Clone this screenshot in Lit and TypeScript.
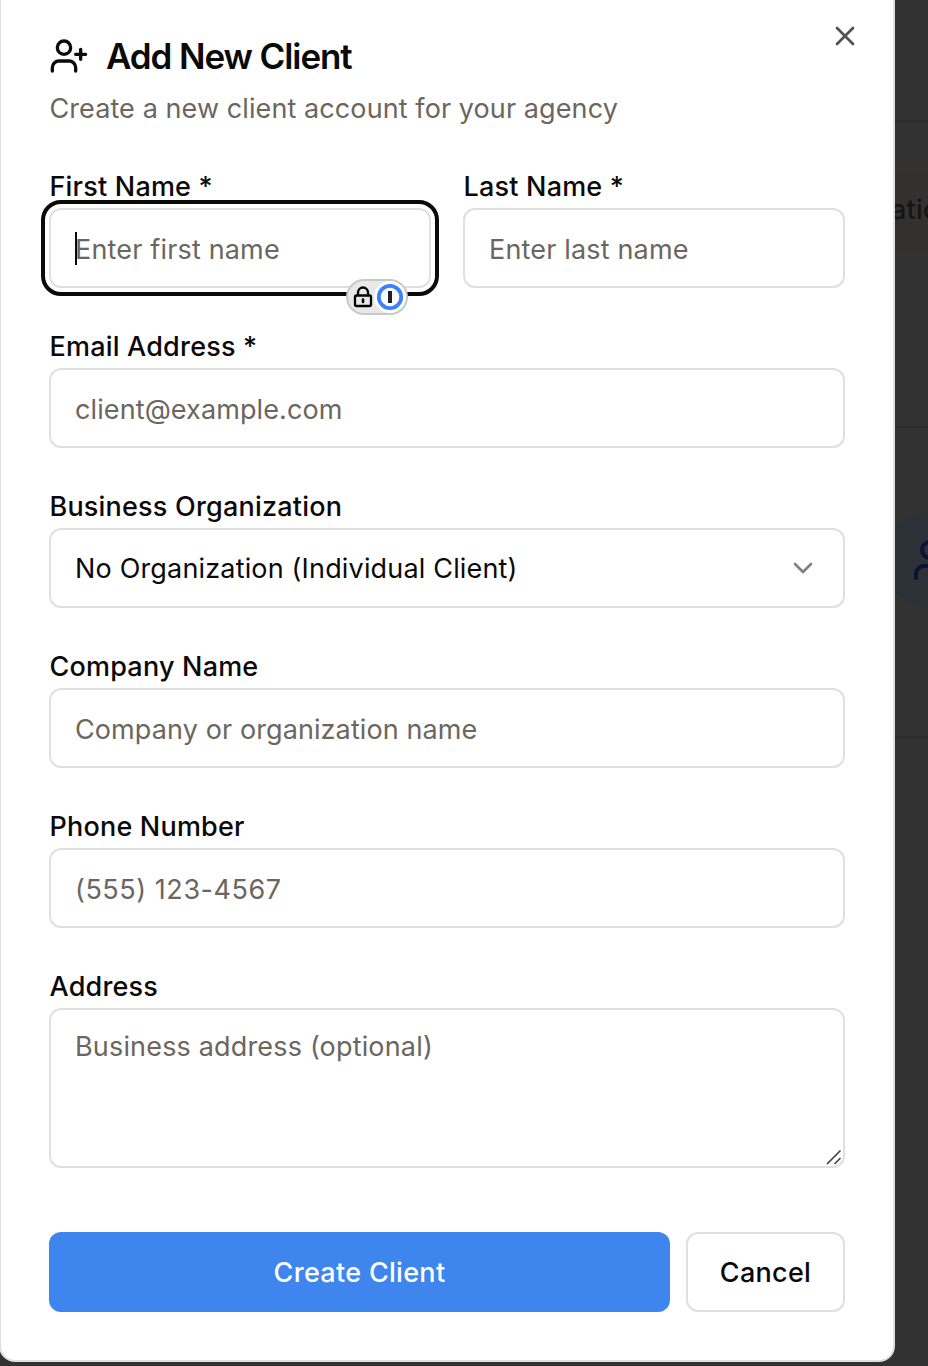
import { LitElement, html, css, svg, nothing } from "lit";
import { customElement, property } from "lit/decorators.js";

const userShape = svg`<path d="M16 21v-2a4 4 0 0 0-4-4H6a4 4 0 0 0-4 4v2"/><circle cx="9" cy="7" r="4"/>`;

@customElement("form-field")
class FormField extends LitElement {
  @property() label = "";
  @property() hint = "";
  @property() value = "";
  @property() kind = "input";
  @property() spacing = "normal";
  @property({ type: Boolean }) active = false;

  static styles = css`
    :host { display: block; min-width: 0; color: #0c0a09; }
    .label { height: 28px; line-height: 30px; margin-bottom: 8px; padding-left: 0.5px; font-weight: 500; letter-spacing: 0.2px; white-space: nowrap; }
    .box { position: relative; box-sizing: border-box; height: 80px; border: 2px solid #e0e0e0; border-radius: 12px; padding: 1px 24px 0; display: flex; align-items: center; justify-content: space-between; background: #fff; line-height: 40px; white-space: nowrap; letter-spacing: 0.17px; }
    .area { height: 160px; padding: 17px 24px; align-items: flex-start; }
    .tight { letter-spacing: 0.1px; }
    .loose { letter-spacing: 0.55px; }
    .active { outline: 4px solid #0c0a09; outline-offset: 4px; }
    .hint { color: #6b6660; padding-top: 2px; }
    .area .hint { padding-top: 0; }
    .caret { position: absolute; left: 24px; top: 22px; width: 2px; height: 33px; background: #0c0a09; }
    .chevron { width: 32px; height: 32px; color: #808080; margin-top: -1px; }
    .grip { position: absolute; right: 0; bottom: 0; width: 18px; height: 18px; }
    .manager { position: absolute; right: 21px; bottom: -29px; box-sizing: border-box; width: 62px; height: 36px; border: 2px solid #c9c9c9; border-radius: 18px; background: #e8e8e8; display: flex; align-items: center; }
    .manager svg { display: block; width: 58px; height: 32px; }
  `;

  render() {
    return html`
      <div class="label">${this.label}</div>
      <div class="box ${this.kind} ${this.spacing} ${this.active ? "active" : ""}">
        ${this.value ? html`<span>${this.value}</span>` : html`<span class="hint">${this.hint}</span>`}
        ${this.kind === "select"
          ? html`<svg class="chevron" viewBox="0 0 24 24" fill="none" stroke="currentColor" stroke-width="2" stroke-linecap="round" stroke-linejoin="round"><path d="m6 9 6 6 6-6"/></svg>`
          : nothing}
        ${this.kind === "area"
          ? html`<svg class="grip" viewBox="0 0 18 18" stroke="#444" stroke-width="1.7"><path d="M2 16 15.500 2.500M9.500 16 15.500 10"/></svg>`
          : nothing}
        ${this.active
          ? html`<div class="caret"></div>
              <div class="manager">
                <svg viewBox="0 0 58 32" fill="none">
                  <circle cx="42" cy="16" r="16" fill="#fff"/>
                  <rect x="7" y="14.500" width="16" height="10.500" rx="1.500" stroke="#000" stroke-width="2.300"/>
                  <path d="M10 14v-2.500a5 5 0 0 1 10 0V14" stroke="#000" stroke-width="2.300"/>
                  <path d="M15 18.500v2.500" stroke="#000" stroke-width="2.600" stroke-linecap="round"/>
                  <circle cx="42" cy="16" r="11.200" stroke="#3b82f6" stroke-width="3.800"/>
                  <path d="M42 10v12" stroke="#222" stroke-width="4"/>
                </svg>
              </div>`
          : nothing}
      </div>
    `;
  }
}

@customElement("app-root")
class AppRoot extends LitElement {
  static styles = css`
    :host { display: block; position: relative; width: 928px; height: 1366px; overflow: hidden; background: #323232; font: 400 27px Inter, sans-serif; color: #0c0a09; }
    .page { position: absolute; top: 0; right: 0; width: 33px; height: 1366px; overflow: hidden; }
    .rule { position: absolute; left: 0; right: 0; height: 2px; background: #2c2c2c; }
    .r1 { top: 120px; } .r2 { top: 426px; } .r3 { top: 736px; }
    .tab { position: absolute; left: 0; top: 170px; width: 33px; height: 80px; background: #32312f; }
    .word { position: absolute; left: -4px; top: 193px; line-height: 34px; font-weight: 500; letter-spacing: 0.2px; color: #151515; }
    .avatar { position: absolute; left: -12px; top: 512px; width: 96px; height: 96px; border-radius: 50%; background: #2c3037; color: #0a1236; display: flex; align-items: center; justify-content: center; }
    .avatar svg { width: 48px; height: 48px; margin-left: 10px; }
    .dialog { position: relative; box-sizing: border-box; width: 896px; height: 1378px; margin: -16px 0 0 -1px; padding: 48px; border: 2px solid #dfdfdf; border-radius: 16px; background: #fff; display: flex; flex-direction: column; }
    .title { display: flex; align-items: center; gap: 17px; height: 44px; font-size: 35px; font-weight: 600; letter-spacing: -1.1px; line-height: 44px; white-space: nowrap; }
    .title svg { width: 40px; height: 40px; }
    .sub { margin-top: 11px; padding-left: 0.5px; line-height: 40px; letter-spacing: 0.09px; color: #6b6660; white-space: nowrap; }
    .close { position: absolute; right: 32px; top: 34px; width: 32px; height: 32px; color: #505050; }
    .form { margin-top: 43px; display: flex; flex-direction: column; gap: 44px; }
    .pair { display: grid; grid-template-columns: 1fr 1fr; gap: 32px; }
    .actions { margin-top: 64px; display: flex; gap: 16px; font-weight: 500; letter-spacing: 0.3px; }
    .btn { box-sizing: border-box; height: 80px; padding-top: 1px; border-radius: 12px; display: flex; align-items: center; justify-content: center; white-space: nowrap; }
    .primary { flex: 1; background: #3e86ed; color: #fff; }
    .plain { width: 159px; border: 2px solid #e0e0e0; }
  `;

  render() {
    return html`
      <div class="page">
        <div class="rule r1"></div>
        <div class="tab"></div>
        <div class="word">atio</div>
        <div class="rule r2"></div>
        <div class="avatar"><svg viewBox="0 0 24 24" fill="none" stroke="currentColor" stroke-width="2" stroke-linecap="round">${userShape}</svg></div>
        <div class="rule r3"></div>
      </div>
      <div class="dialog">
        <div class="title">
          <svg viewBox="0 0 24 24" fill="none" stroke="currentColor" stroke-width="2" stroke-linecap="round" stroke-linejoin="round">${userShape}<path d="M19 8v6M22 11h-6"/></svg>
          <span>Add New Client</span>
        </div>
        <div class="sub">Create a new client account for your agency</div>
        <svg class="close" viewBox="0 0 24 24" fill="none" stroke="currentColor" stroke-width="2" stroke-linecap="round"><path d="M18 6 6 18M6 6l12 12"/></svg>
        <div class="form">
          <div class="pair">
            <form-field label="First Name *" hint="Enter first name" active></form-field>
            <form-field label="Last Name *" hint="Enter last name"></form-field>
          </div>
          <form-field label="Email Address *" hint="client@example.com" spacing="tight"></form-field>
          <form-field label="Business Organization" value="No Organization (Individual Client)" kind="select"></form-field>
          <form-field label="Company Name" hint="Company or organization name" spacing="tight"></form-field>
          <form-field label="Phone Number" hint="(555) 123-4567" spacing="loose"></form-field>
          <form-field label="Address" hint="Business address (optional)" kind="area"></form-field>
        </div>
        <div class="actions">
          <div class="btn primary">Create Client</div>
          <div class="btn plain">Cancel</div>
        </div>
      </div>
    `;
  }
}
